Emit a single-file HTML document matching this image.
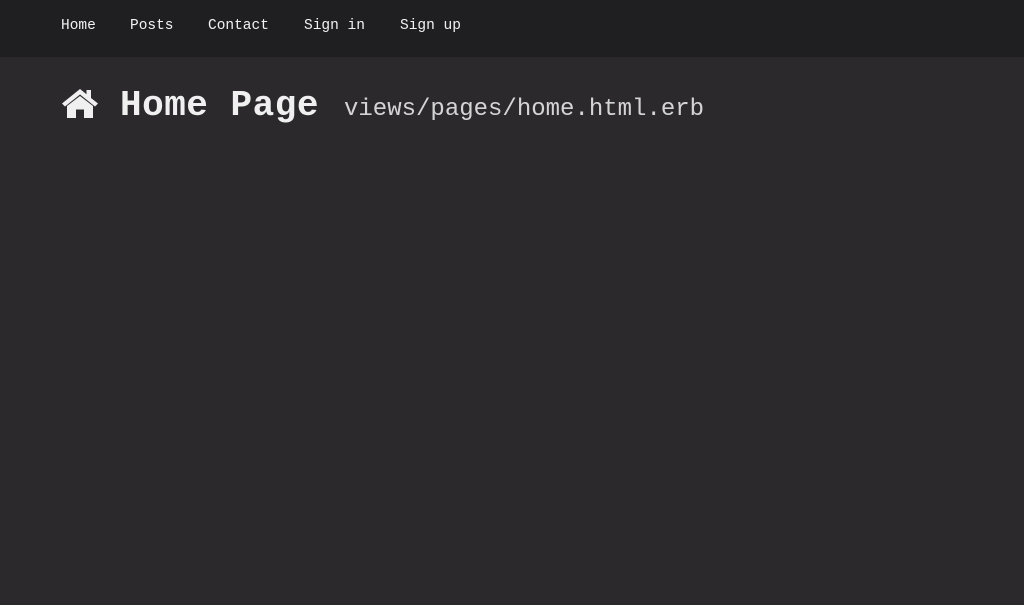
<!DOCTYPE html>
<html><head><meta charset="utf-8"><style>
html,body{margin:0;padding:0;width:1024px;height:605px;background:#2b292c;overflow:hidden;font-family:"Liberation Mono",monospace;}
nav{height:57px;background:#1f1e21;position:relative;}
nav a{position:absolute;top:16px;color:#f2f2f2;font-size:14.5px;text-decoration:none;line-height:20px;}
h1{position:absolute;left:62px;top:84px;margin:0;color:#f0f0f0;font-size:36px;font-weight:bold;line-height:44px;white-space:nowrap;}
h1 svg{position:absolute;left:0;top:4px;}
h1 .t{position:absolute;left:58px;top:0;letter-spacing:0.5px;}
h1 small{position:absolute;left:282px;top:4px;font-size:24px;font-weight:normal;color:#d4d4d4;letter-spacing:0;}
</style></head><body>
<nav>
<a style="left:61px">Home</a>
<a style="left:130px">Posts</a>
<a style="left:208px">Contact</a>
<a style="left:304px">Sign in</a>
<a style="left:400px">Sign up</a>
</nav>
<h1><svg width="36" height="31" viewBox="0 0 36 31"><path fill="#f0f0f0" d="M18 1 L0 15.5 L3 18.5 L18 6.5 L33 18.5 L36 15.5 L29 10 L29 2 L24.5 2 L24.5 6.3 Z M5 18 L5 30 L14 30 L14 21.5 L22 21.5 L22 30 L31 30 L31 18 L18 8 Z"/></svg><span class="t">Home Page</span><small>views/pages/home.html.erb</small></h1>
</body></html>
